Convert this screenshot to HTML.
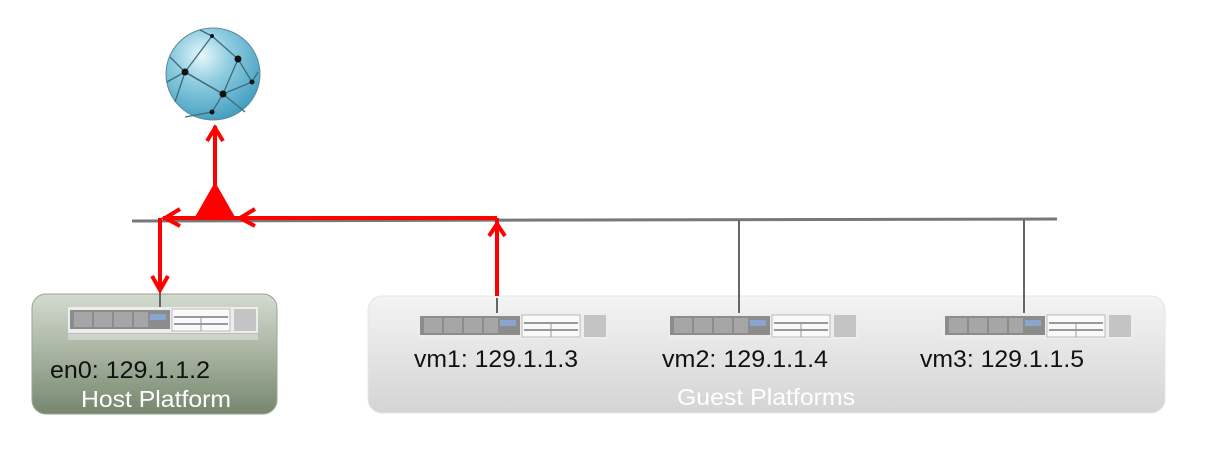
<!DOCTYPE html>
<html><head><meta charset="utf-8"><style>
html,body{margin:0;padding:0;background:#fff;width:1231px;height:452px;overflow:hidden}
svg{display:block}
text{font-family:"Liberation Sans",Arial,sans-serif}
</style></head><body>
<svg width="1231" height="452" viewBox="0 0 1231 452" xmlns="http://www.w3.org/2000/svg">
<defs>
<linearGradient id="hg" x1="0" y1="0" x2="0" y2="1"><stop offset="0" stop-color="#d3dbcf"/><stop offset="0.5" stop-color="#a7b3a0"/><stop offset="1" stop-color="#76876e"/></linearGradient>
<linearGradient id="gg" x1="0" y1="0" x2="0" y2="1"><stop offset="0" stop-color="#f4f4f4"/><stop offset="1" stop-color="#d4d4d4"/></linearGradient>
<radialGradient id="gl" cx="0.38" cy="0.3" r="0.75"><stop offset="0" stop-color="#e8f6fb"/><stop offset="0.4" stop-color="#8fcde0"/><stop offset="1" stop-color="#3f9cbf"/></radialGradient>
<g id="srv">
<rect x="0" y="0" width="190" height="26" fill="#ededed"/>
<rect x="2" y="3" width="100" height="19" fill="#8c8c8c"/>
<rect x="6" y="5" width="18" height="15" fill="#a6a6a6"/><rect x="26" y="5" width="18" height="15" fill="#a6a6a6"/><rect x="46" y="5" width="18" height="15" fill="#a6a6a6"/><rect x="66" y="5" width="14" height="15" fill="#a6a6a6"/>
<rect x="82" y="7" width="16" height="6" fill="#8aa6cf"/>
<rect x="104" y="2" width="58" height="22" fill="#fafafa" stroke="#bbb"/>
<line x1="106" y1="10" x2="160" y2="10" stroke="#999" stroke-width="2"/><line x1="106" y1="17" x2="160" y2="17" stroke="#999" stroke-width="2"/><line x1="133" y1="10" x2="133" y2="24" stroke="#999"/>
<rect x="166" y="2" width="22" height="22" fill="#c4c4c4"/>
<rect x="0" y="27" width="190" height="6" fill="#e8e8e8" opacity="0.5"/>
</g>
</defs>
<rect x="32" y="294" width="245" height="120" rx="14" fill="url(#hg)" stroke="#9aa595"/>
<rect x="368" y="296" width="797" height="117" rx="14" fill="url(#gg)" stroke="#e6e6e6"/>
<use href="#srv" x="68" y="307"/>
<use href="#srv" x="418" y="313"/>
<use href="#srv" x="668" y="313"/>
<use href="#srv" x="943" y="313"/>
<line x1="132" y1="221" x2="1057" y2="219" stroke="#777" stroke-width="3"/>
<line x1="739" y1="220" x2="739" y2="313" stroke="#666" stroke-width="2"/>
<line x1="1024" y1="220" x2="1024" y2="313" stroke="#666" stroke-width="2"/>
<line x1="160" y1="290" x2="160" y2="307" stroke="#666" stroke-width="2"/>
<line x1="497" y1="298" x2="497" y2="313" stroke="#666" stroke-width="2"/>
<ellipse cx="213" cy="74" rx="47" ry="46" fill="url(#gl)" stroke="#5a8a99"/>
<g stroke="#3d6b78" stroke-width="1.3" fill="none">
<path d="M212 36 L238 59 L252 82 L223 94 L185 72 L212 36"/><path d="M185 72 L223 94 L212 112"/><path d="M238 59 L223 94"/><path d="M167 82 L185 72 L170 57"/><path d="M212 36 L200 30"/><path d="M252 82 L258 72"/><path d="M223 94 L245 112"/><path d="M212 112 L185 117"/><path d="M185 72 L175 102"/>
</g>
<g fill="#111"><circle cx="238" cy="59" r="3.5"/><circle cx="185" cy="72" r="3.5"/><circle cx="223" cy="94" r="3.5"/><circle cx="212" cy="112" r="2.5"/><circle cx="252" cy="82" r="2.5"/><circle cx="212" cy="36" r="2"/></g>
<g stroke="#f00" stroke-width="4" fill="none">
<line x1="163" y1="218" x2="497" y2="218"/>
<line x1="497" y1="218" x2="497" y2="296"/>
<line x1="160" y1="218" x2="160" y2="290"/>
<line x1="215" y1="126" x2="215" y2="185"/>
<path d="M180 209 L165 218 L180 226"/>
<path d="M255 209 L240 218 L255 226"/>
<path d="M489 236 L497 224 L505 236"/>
<path d="M152 276 L160 290 L168 276"/>
<path d="M207 141 L215 128 L223 141"/>
</g>
<path d="M215 182 L235 217 L195 217 Z" fill="#f00"/>
<g font-size="24" fill="#111">
<text x="50" y="378" textLength="160" lengthAdjust="spacingAndGlyphs">en0: 129.1.1.2</text>
<text x="414" y="367" textLength="164" lengthAdjust="spacingAndGlyphs">vm1: 129.1.1.3</text>
<text x="662" y="367" textLength="166" lengthAdjust="spacingAndGlyphs">vm2: 129.1.1.4</text>
<text x="920" y="367" textLength="164" lengthAdjust="spacingAndGlyphs">vm3: 129.1.1.5</text>
</g>
<text x="81" y="407" font-size="23" fill="#fff" textLength="150" lengthAdjust="spacingAndGlyphs">Host Platform</text>
<text x="677" y="405" font-size="23" fill="#fff" textLength="178" lengthAdjust="spacingAndGlyphs">Guest Platforms</text>
</svg>
</body></html>
